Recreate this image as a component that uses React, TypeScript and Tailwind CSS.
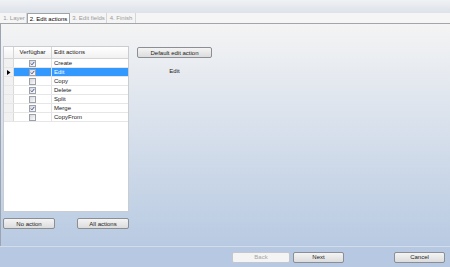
const rows = [
  { name: 'Create', on: true },
  { name: 'Edit', on: true, selected: true },
  { name: 'Copy', on: false },
  { name: 'Delete', on: true },
  { name: 'Split', on: false },
  { name: 'Merge', on: true },
  { name: 'CopyFrom', on: false },
]

const font = { fontFamily: '"Liberation Sans", Arial, sans-serif' }

function Check({ on }: { on: boolean }) {
  return (
    <span className="flex h-[7px] w-[7px] items-center justify-center border border-[#9aa1ad] bg-gradient-to-br from-[#d8d8d8] to-[#fbfbfb]">
      {on && (
        <svg viewBox="0 0 5 5" className="h-[5px] w-[5px]">
          <path d="M0.8 2.6 L2 3.8 L4.3 0.9" stroke="#2f4597" strokeWidth="0.9" fill="none" />
        </svg>
      )}
    </span>
  )
}

function Btn({ label, w, disabled }: { label: string; w: string; disabled?: boolean }) {
  return (
    <button
      className={`${w} flex h-[11px] items-center justify-center rounded-[2px] border text-[6px] leading-none ${
        disabled
          ? 'border-[#c4c7cc] bg-[#f4f4f4] text-[#a4a4a4]'
          : 'border-[#8b8e93] bg-gradient-to-b from-[#f4f4f4] to-[#dcdcdc] text-[#1a1a1a]'
      }`}
    >
      {label}
    </button>
  )
}

function Tab({ label, w, active }: { label: string; w: string; active?: boolean }) {
  if (active)
    return (
      <div className={`${w} -mb-px flex h-[11px] items-center justify-center rounded-t-[1px] border border-b-0 border-[#9fa3a8] bg-white text-[6px] text-black`}>
        {label}
      </div>
    )
  return (
    <div className={`${w} flex h-[10px] items-center justify-center border-r border-[#d6d6d6] text-[6px] text-[#9a9a9a]`}>
      {label}
    </div>
  )
}

export default function App() {
  return (
    <div className="flex h-[267px] w-[450px] flex-col overflow-hidden bg-white" style={font}>
      <div className="h-[13px] bg-gradient-to-b from-[#eff1f4] to-[#dde2e9]" />
      <div className="flex h-[10px] items-end bg-[#f5f5f5] pl-[2px]">
        <Tab label="1. Layer" w="w-[25px]" />
        <Tab label="2. Edit actions" w="w-[43px]" active />
        <div className="w-[1px]" />
        <Tab label="3. Edit fields" w="w-[36px]" />
        <Tab label="4. Finish" w="w-[29px]" />
      </div>
      <div className="h-[1px] bg-[#a2a5a9]" />
      <div className="flex flex-1 gap-[8px] border-l border-[#9aa4b2] bg-gradient-to-b from-[#f4f4f4] to-[#b8cae2] pl-[2px] pt-[22px]">
        <div className="flex w-[126px] flex-col gap-[6px]">
          <div className="h-[166px] border border-[#c9ccd1] bg-white">
            <div className="flex h-[12px] border-b border-[#d5d5d5] bg-gradient-to-b from-white to-[#f1f1f1] text-[6px] text-[#222]">
              <div className="w-[10px] border-r border-[#d5d5d5]" />
              <div className="flex w-[38px] items-center justify-center border-r border-[#d5d5d5]">Verfügbar</div>
              <div className="flex flex-1 items-center pl-[2px]">Edit actions</div>
            </div>
            {rows.map((r) => (
              <div key={r.name} className="flex h-[9px] border-b border-[#e6e6e6] text-[6px]">
                <div className="flex w-[10px] items-center justify-start border-r border-[#d9d9d9] bg-[#f1f1f1] pl-[3px]">
                  {r.selected && (
                    <svg viewBox="0 0 4 5" className="h-[5px] w-[4px]">
                      <path d="M0 0 L3.5 2.5 L0 5 Z" fill="#000" />
                    </svg>
                  )}
                </div>
                <div className={`flex w-[38px] items-center justify-center border-r border-[#e2e2e2] ${r.selected ? 'bg-[#3399ff]' : ''}`}>
                  <Check on={r.on} />
                </div>
                <div className={`flex flex-1 items-center pl-[2px] ${r.selected ? 'bg-[#3399ff] text-white' : 'text-[#1a1a1a]'}`}>
                  {r.name}
                </div>
              </div>
            ))}
          </div>
          <div className="flex justify-between">
            <Btn label="No action" w="w-[52px]" />
            <Btn label="All actions" w="w-[52px]" />
          </div>
        </div>
        <div className="flex w-[75px] flex-col items-center gap-[9px] pt-[1px]">
          <Btn label="Default edit action" w="w-[75px] h-[10px]" />
          <span className="text-[6px] text-[#1a1a1a]">Edit</span>
        </div>
      </div>
      <div className="flex h-[21px] items-center border-t border-[#d3dce8] bg-[#b7c9e2] pr-[5px]">
        <div className="flex-1" />
        <Btn label="Back" w="w-[58px]" disabled />
        <div className="w-[3px]" />
        <Btn label="Next" w="w-[51px]" />
        <div className="w-[50px]" />
        <Btn label="Cancel" w="w-[51px]" />
      </div>
    </div>
  )
}
